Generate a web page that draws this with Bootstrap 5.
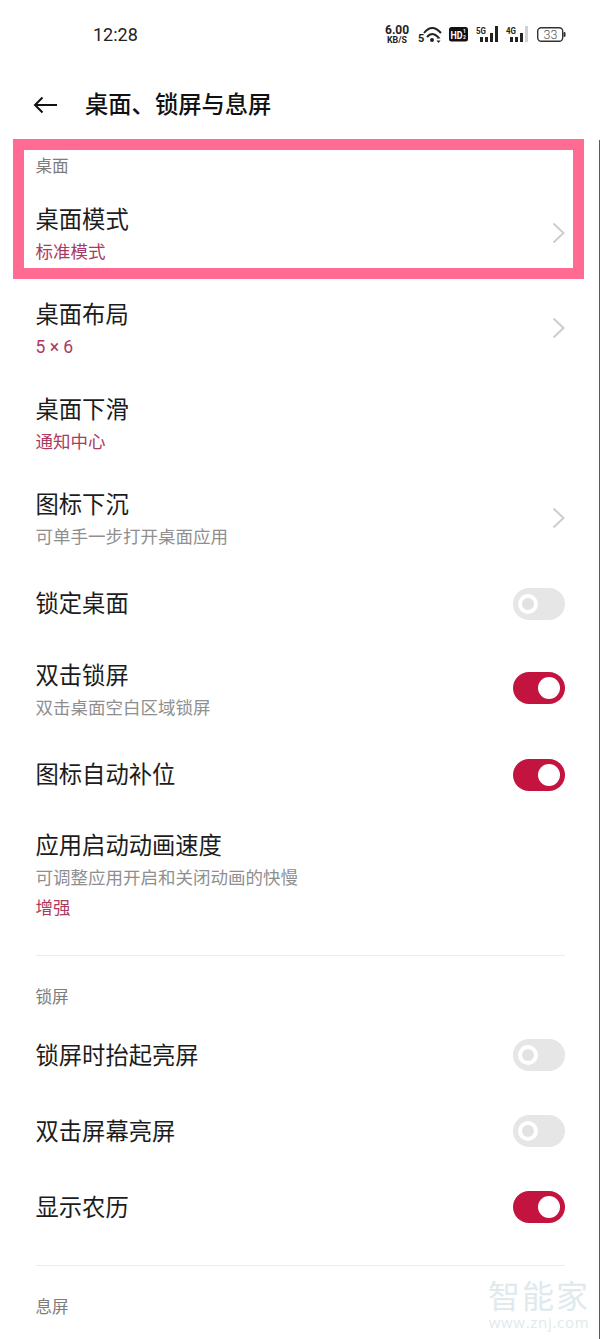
<!DOCTYPE html>
<html lang="zh-CN">
<head>
  <meta charset="UTF-8" />
  <meta name="viewport" content="width=device-width, initial-scale=1" />
  <title>桌面、锁屏与息屏</title>
  <link href="https://cdn.jsdelivr.net/npm/bootstrap@5.3.0/dist/css/bootstrap.min.css" rel="stylesheet" />
  <style>
    body {
      background: #fff;
      color: #1c1c1c;
      font-family: "Noto Sans CJK SC", "Noto Sans", sans-serif;
      overflow: hidden;
    }
    .page-shell { width: 600px; height: 1339px; position: relative; overflow: hidden; }
    /* thin dark edge on the right of the screenshot */
    .page-shell::after { content: ""; position: absolute; right: 0; top: 140px; bottom: 0; width: 1px; background: #5a5a5a; }

    /* status bar */
    .status-bar { height: 70px; padding: 0 34px 2px 93px; }
    .status-time { font-family: Roboto, sans-serif; font-size: 18px; color: #222; }
    .status-icons svg { display: block; }
    .svg-txt { font-family: Roboto, "Liberation Sans", sans-serif; }

    /* header */
    .top-head { height: 69px; padding: 0 0 4px 33px; }
    .top-head svg { margin-top: 4px; }
    .top-head h1 { font-size: 23.3px; font-weight: 500; margin: 0 0 0 27px; line-height: 32px; color: #111; }

    /* rows */
    .sect-name { font-size: 16.600px; line-height: 24px; color: #7d7d7d; padding-left: 35.5px; }
    .set-row { padding: 15px 35px 17px 35.5px; }
    .row-name { font-size: 23.3px; line-height: 32px; color: #1c1c1c; margin-top: -2px; margin-bottom: 1px; }
    .row-sub { font-size: 17.500px; line-height: 32px; color: #8f8f8f; }
    .row-val { font-family: Roboto, "Noto Sans CJK SC", sans-serif; font-size: 17.500px; line-height: 32px; color: #ab3a62; padding-top: 1px; margin-bottom: -1px; }
    .row-val.tight { line-height: 26px; padding-top: 2px; margin-bottom: 0; }
    .set-row.toggle-row { min-height: 70px; padding-top: 18px; padding-bottom: 18px; }
    .set-row.toggle-tall { padding-top: 21px; padding-bottom: 17px; }
    .set-row.toggle-76 { min-height: 76px; padding-top: 21px; padding-bottom: 21px; }
    .set-row.speed-row { padding-top: 20px; padding-bottom: 0; }
    .toggle-row .row-name { margin-bottom: 3px; }

    .hl-box { border: 11px solid #ff6b93; margin: 0 16px 5px 13px; height: 140px; padding: 3px 8px 0 11.5px; }
    .hl-box .sect-name { padding-left: 0; }
    .hl-box .hl-row { margin-top: 27px; }

    .soft-rule { height: 1px; background: #ececec; margin: 0 35px 0 36px; }
    .rule-one { margin-top: 34px; margin-bottom: 28px; }
    .rule-two { margin-top: 20px; margin-bottom: 28px; }
    .sect-lock { margin-bottom: 9px; }

    /* switch */
    .sw { width: 52px; height: 32px; border-radius: 16px; position: relative; flex: none; background: #e6e6e6; }
    .sw::after { content: ""; position: absolute; top: 6px; left: 5px; width: 20px; height: 20px; border-radius: 50%; background: #e2e2e2; border: 4px solid #fff; }
    .sw.on { background: #c2143f; }
    .sw.on::after { left: auto; right: 5px; top: 5px; width: 22px; height: 22px; background: #fff; border: 0; }
    .sw-up { margin-bottom: 7px; }

    .chev { flex: none; margin-bottom: 6px; }

    /* watermark */
    .wm-mark { position: absolute; right: 10px; top: 1275px; text-align: center; color: #e0eaed; line-height: 1; }
    .wm-mark .wm-big { font-size: 32px; letter-spacing: 2px; line-height: 38px; }
    .wm-mark .wm-url { font-family: "Open Sans", sans-serif; font-size: 15px; letter-spacing: .7px; line-height: 18px; }
  </style>
</head>
<body>
  <div class="page-shell">
    <div class="status-bar d-flex align-items-center justify-content-between">
      <span class="status-time">12:28</span>
      <div class="status-icons d-flex align-items-center">
        <svg width="182" height="24" viewBox="0 0 182 24">
          <text class="svg-txt" x="1" y="11.500" font-size="12" font-weight="700" fill="#222">6.00</text>
          <text class="svg-txt" x="3" y="21" font-size="9" font-weight="700" fill="#222" textLength="20" lengthAdjust="spacingAndGlyphs">KB/S</text>
          <text class="svg-txt" x="34" y="19.500" font-size="11" font-weight="700" fill="#222">5</text>
          <g fill="none" stroke="#222" stroke-width="2">
            <path d="M40 11Q48 1 57 11" />
            <path d="M43 15Q48 9 54 15" />
          </g>
          <circle cx="48" cy="18" r="2" fill="#222" />
          <path d="M54.500 14l2 2.500h-4zM54.500 21l2-2.500h-4z" fill="#222" />
          <rect x="65" y="5" width="19" height="14.500" rx="2.500" fill="#111" />
          <text class="svg-txt" x="66.500" y="16.500" font-size="11.500" font-weight="700" fill="#fff" textLength="12" lengthAdjust="spacingAndGlyphs">HD</text>
          <text class="svg-txt" x="79" y="11" font-size="5" font-weight="700" fill="#fff">1</text>
          <text class="svg-txt" x="79" y="17" font-size="5" font-weight="700" fill="#fff">2</text>
          <text class="svg-txt" x="92" y="11.500" font-size="9" font-weight="700" fill="#222" textLength="10" lengthAdjust="spacingAndGlyphs">5G</text>
          <g fill="#222">
            <rect x="96" y="15" width="3" height="5" />
            <rect x="101" y="15" width="3" height="5" />
            <rect x="106" y="11" width="3" height="9" />
            <rect x="111" y="4" width="3" height="16" />
          </g>
          <text class="svg-txt" x="122" y="11.500" font-size="9" font-weight="700" fill="#222" textLength="10" lengthAdjust="spacingAndGlyphs">4G</text>
          <g fill="#222">
            <rect x="126" y="15" width="3" height="5" />
            <rect x="131" y="15" width="3" height="5" />
            <rect x="136" y="11" width="3" height="9" />
          </g>
          <rect x="141" y="4" width="3" height="16" fill="#d2d2d2" />
          <rect x="153.700" y="5.700" width="25" height="13.600" rx="3.500" fill="none" stroke="#333" stroke-width="1.400" />
          <rect x="179.500" y="10" width="2" height="5" rx="1" fill="#333" />
          <text class="svg-txt" x="159.500" y="16.500" font-size="12.500" font-weight="300" fill="#555">33</text>
        </svg>
      </div>
    </div>

    <div class="top-head d-flex align-items-center">
      <svg width="25" height="18" viewBox="0 0 25 18"><path d="M24 9H2M9.500 1.500 2 9l7.500 7.500" fill="none" stroke="#111" stroke-width="2" /></svg>
      <h1>桌面、锁屏与息屏</h1>
    </div>

    <div class="hl-box">
      <div class="sect-name">桌面</div>
      <div class="hl-row d-flex align-items-center justify-content-between">
        <div>
          <div class="row-name">桌面模式</div>
          <div class="row-val">标准模式</div>
        </div>
        <svg class="chev" width="13" height="22" viewBox="0 0 13 22"><path d="M1.500 1.500 11.500 11 1.500 20.500" fill="none" stroke="#cdcdcd" stroke-width="2" /></svg>
      </div>
    </div>

    <div class="set-row d-flex align-items-center justify-content-between">
      <div>
        <div class="row-name">桌面布局</div>
        <div class="row-val">5 × 6</div>
      </div>
      <svg class="chev" width="13" height="22" viewBox="0 0 13 22"><path d="M1.500 1.500 11.500 11 1.500 20.500" fill="none" stroke="#cdcdcd" stroke-width="2" /></svg>
    </div>
    <div class="set-row d-flex align-items-center justify-content-between">
      <div>
        <div class="row-name">桌面下滑</div>
        <div class="row-val">通知中心</div>
      </div>
    </div>
    <div class="set-row d-flex align-items-center justify-content-between">
      <div>
        <div class="row-name">图标下沉</div>
        <div class="row-sub">可单手一步打开桌面应用</div>
      </div>
      <svg class="chev" width="13" height="22" viewBox="0 0 13 22"><path d="M1.500 1.500 11.500 11 1.500 20.500" fill="none" stroke="#cdcdcd" stroke-width="2" /></svg>
    </div>
    <div class="set-row toggle-row d-flex align-items-center justify-content-between">
      <div class="row-name">锁定桌面</div>
      <span class="sw"></span>
    </div>
    <div class="set-row toggle-tall d-flex align-items-center justify-content-between">
      <div>
        <div class="row-name">双击锁屏</div>
        <div class="row-sub">双击桌面空白区域锁屏</div>
      </div>
      <span class="sw on sw-up"></span>
    </div>
    <div class="set-row toggle-row d-flex align-items-center justify-content-between">
      <div class="row-name">图标自动补位</div>
      <span class="sw on"></span>
    </div>
    <div class="set-row speed-row">
      <div class="row-name">应用启动动画速度</div>
      <div class="row-sub">可调整应用开启和关闭动画的快慢</div>
      <div class="row-val tight">增强</div>
    </div>

    <div class="soft-rule rule-one"></div>
    <div class="sect-name sect-lock">锁屏</div>
    <div class="set-row toggle-76 d-flex align-items-center justify-content-between">
      <div class="row-name">锁屏时抬起亮屏</div>
      <span class="sw"></span>
    </div>
    <div class="set-row toggle-76 d-flex align-items-center justify-content-between">
      <div class="row-name">双击屏幕亮屏</div>
      <span class="sw"></span>
    </div>
    <div class="set-row toggle-76 d-flex align-items-center justify-content-between">
      <div class="row-name">显示农历</div>
      <span class="sw on"></span>
    </div>

    <div class="soft-rule rule-two"></div>
    <div class="sect-name">息屏</div>

    <div class="wm-mark">
      <div class="wm-big">智能家</div>
      <div class="wm-url">www.znj.com</div>
    </div>
  </div>

  <script src="https://cdn.jsdelivr.net/npm/bootstrap@5.3.0/dist/js/bootstrap.bundle.min.js"></script>
</body>
</html>
